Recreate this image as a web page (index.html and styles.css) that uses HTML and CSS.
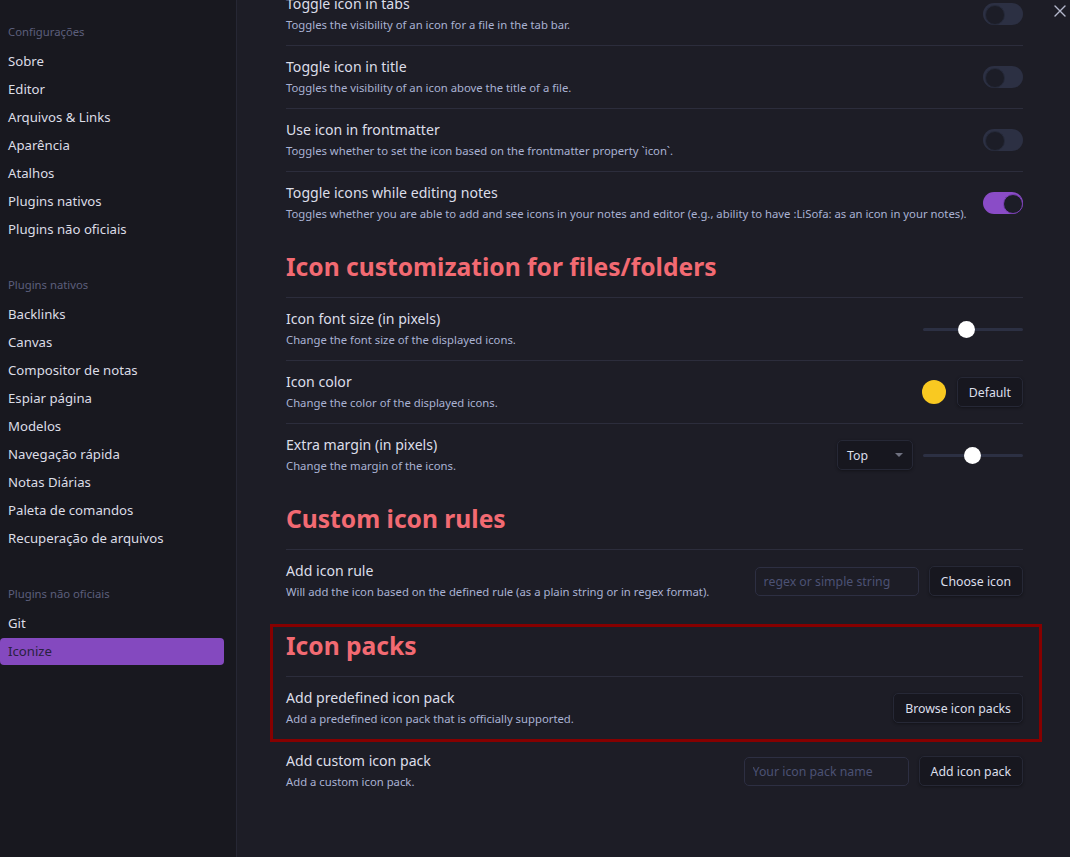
FILE: index.html
```html
<!DOCTYPE html>
<html lang="pt">
<head>
<meta charset="utf-8">
<title>Configurações</title>
<link rel="stylesheet" href="styles.css">
</head>
<body>
<div class="modal">
  <nav class="sidebar">
    <div class="group">
      <div class="group-title">Configurações</div>
      <div class="nav-item">Sobre</div>
      <div class="nav-item">Editor</div>
      <div class="nav-item">Arquivos &amp; Links</div>
      <div class="nav-item">Aparência</div>
      <div class="nav-item">Atalhos</div>
      <div class="nav-item">Plugins nativos</div>
      <div class="nav-item">Plugins não oficiais</div>
    </div>
    <div class="group">
      <div class="group-title">Plugins nativos</div>
      <div class="nav-item">Backlinks</div>
      <div class="nav-item">Canvas</div>
      <div class="nav-item">Compositor de notas</div>
      <div class="nav-item">Espiar página</div>
      <div class="nav-item">Modelos</div>
      <div class="nav-item">Navegação rápida</div>
      <div class="nav-item">Notas Diárias</div>
      <div class="nav-item">Paleta de comandos</div>
      <div class="nav-item">Recuperação de arquivos</div>
    </div>
    <div class="group">
      <div class="group-title">Plugins não oficiais</div>
      <div class="nav-item">Git</div>
      <div class="nav-item active">Iconize</div>
    </div>
  </nav>
  <main class="content">
    <div class="scroll">
      <div class="setting">
        <div class="info">
          <div class="name">Toggle icon in tabs</div>
          <div class="desc">Toggles the visibility of an icon for a file in the tab bar.</div>
        </div>
        <div class="control"><div class="toggle"></div></div>
      </div>
      <div class="setting">
        <div class="info">
          <div class="name">Toggle icon in title</div>
          <div class="desc">Toggles the visibility of an icon above the title of a file.</div>
        </div>
        <div class="control"><div class="toggle"></div></div>
      </div>
      <div class="setting">
        <div class="info">
          <div class="name">Use icon in frontmatter</div>
          <div class="desc">Toggles whether to set the icon based on the frontmatter property `icon`.</div>
        </div>
        <div class="control"><div class="toggle"></div></div>
      </div>
      <div class="setting">
        <div class="info">
          <div class="name">Toggle icons while editing notes</div>
          <div class="desc">Toggles whether you are able to add and see icons in your notes and editor (e.g., ability to have :LiSofa: as an icon in your notes).</div>
        </div>
        <div class="control"><div class="toggle on"></div></div>
      </div>

      <h2 class="heading">Icon customization for files/folders</h2>
      <div class="setting first">
        <div class="info">
          <div class="name">Icon font size (in pixels)</div>
          <div class="desc">Change the font size of the displayed icons.</div>
        </div>
        <div class="control">
          <div class="slider"><div class="thumb" style="left: 43px"></div></div>
        </div>
      </div>
      <div class="setting">
        <div class="info">
          <div class="name">Icon color</div>
          <div class="desc">Change the color of the displayed icons.</div>
        </div>
        <div class="control">
          <div class="swatch"></div>
          <button class="btn">Default</button>
        </div>
      </div>
      <div class="setting">
        <div class="info">
          <div class="name">Extra margin (in pixels)</div>
          <div class="desc">Change the margin of the icons.</div>
        </div>
        <div class="control">
          <div class="select"><span>Top</span><span class="caret"></span></div>
          <div class="slider"><div class="thumb" style="left: 49px"></div></div>
        </div>
      </div>

      <h2 class="heading">Custom icon rules</h2>
      <div class="setting first">
        <div class="info">
          <div class="name">Add icon rule</div>
          <div class="desc">Will add the icon based on the defined rule (as a plain string or in regex format).</div>
        </div>
        <div class="control">
          <input class="input rule-input" type="text" placeholder="regex or simple string">
          <button class="btn">Choose icon</button>
        </div>
      </div>

      <section class="highlight">
        <h2 class="heading">Icon packs</h2>
        <div class="setting first">
          <div class="info">
            <div class="name">Add predefined icon pack</div>
            <div class="desc">Add a predefined icon pack that is officially supported.</div>
          </div>
          <div class="control">
            <button class="btn">Browse icon packs</button>
          </div>
        </div>
        <div class="annotation"></div>
      </section>
      <div class="setting">
        <div class="info">
          <div class="name">Add custom icon pack</div>
          <div class="desc">Add a custom icon pack.</div>
        </div>
        <div class="control">
          <input class="input pack-input" type="text" placeholder="Your icon pack name">
          <button class="btn">Add icon pack</button>
        </div>
      </div>
    </div>
  </main>
  <button class="close" aria-label="Fechar">
    <svg width="12" height="12" viewBox="0 0 12 12"><path d="M1 1 L11 11 M11 1 L1 11" stroke="#b4b8cc" stroke-width="1.4" stroke-linecap="round" fill="none"/></svg>
  </button>
</div>
</body>
</html>
```

FILE: styles.css
```css
* { box-sizing: border-box; }

html, body {
  margin: 0;
  padding: 0;
  height: 100%;
  background: #1d1d26;
  font-family: "Noto Sans", "Open Sans", sans-serif;
  overflow: hidden;
}

.modal {
  position: relative;
  display: flex;
  width: 1070px;
  height: 857px;
}

/* Sidebar */
.sidebar {
  width: 237px;
  flex: none;
  background: #18181f;
  border-right: 1px solid #262734;
  padding: 22px 12px 0 0;
  display: flex;
  flex-direction: column;
  gap: 32px;
}

.group-title {
  padding-left: 8px;
  font-size: 11.3px;
  line-height: 20px;
  color: #5c5f7c;
  margin-bottom: 5px;
}

.nav-item {
  padding-left: 8px;
  height: 28px;
  line-height: 28px;
  font-size: 13.2px;
  color: #dcdde6;
  border-radius: 4px;
}

.nav-item.active {
  height: 27px;
  line-height: 27px;
  margin-top: 1px;
  background: #8449bf;
  color: #2a2140;
}

/* Content */
.content {
  flex: 1;
  padding: 0 47px 0 49px;
  overflow: hidden;
}

.scroll {
  margin-top: -17px;
}

.setting {
  display: flex;
  align-items: center;
  gap: 16px;
  padding: 11px 0 11px;
  border-top: 1px solid #2c2d3c;
}

.scroll > .setting:first-child {
  border-top: none;
}

.info {
  flex: 1;
  min-width: 0;
}

.name {
  font-size: 14.1px;
  line-height: 20px;
  color: #dcdee9;
}

.desc {
  margin-top: 2px;
  font-size: 11.3px;
  line-height: 18px;
  color: #a9b2d3;
  white-space: nowrap;
}

.control {
  display: flex;
  align-items: center;
  gap: 10px;
  flex: none;
}

.heading {
  margin: 17px 0 14px;
  font-size: 24.6px;
  line-height: 32px;
  font-weight: 700;
  color: #f26a72;
}

/* Toggle */
.toggle {
  position: relative;
  width: 40px;
  height: 22px;
  border-radius: 11px;
  background: #2c3043;
}

.toggle::after {
  content: "";
  position: absolute;
  top: 2px;
  left: 2px;
  width: 18px;
  height: 18px;
  border-radius: 50%;
  background: #1c1d27;
  border: 1px solid #262a3a;
}

.toggle.on {
  background: #8a4cc7;
}

.toggle.on::after {
  left: 20px;
  border-color: #7a40b5;
}

/* Slider */
.slider {
  position: relative;
  width: 100px;
  height: 3px;
  border-radius: 2px;
  background: #2c3043;
}

.thumb {
  position: absolute;
  top: -7px;
  width: 17px;
  height: 17px;
  margin-left: -8px;
  border-radius: 50%;
  background: #ffffff;
}

/* Color */
.swatch {
  width: 24px;
  height: 24px;
  border-radius: 50%;
  background: #f9c921;
  margin-right: 1px;
}

/* Buttons and inputs */
.btn {
  height: 30px;
  padding: 0 11px;
  border: 1px solid #262836;
  border-radius: 5px;
  background: #17171f;
  color: #dcdfeb;
  font-family: inherit;
  font-size: 12.3px;
  box-shadow: 0 1px 3px rgba(0, 0, 0, 0.35);
}

.select {
  width: 76px;
  height: 30px;
  display: flex;
  align-items: center;
  justify-content: space-between;
  padding: 0 9px 0 9px;
  border: 1px solid #262836;
  border-radius: 5px;
  background: #17171f;
  color: #dcdfeb;
  font-size: 12.3px;
  box-shadow: 0 1px 3px rgba(0, 0, 0, 0.35);
}

.caret {
  width: 0;
  height: 0;
  border-left: 4px solid transparent;
  border-right: 4px solid transparent;
  border-top: 4px solid #6f7180;
}

.input {
  height: 29px;
  padding: 0 8px;
  border: 1px solid #2d2f42;
  border-radius: 5px;
  background: #1d1d26;
  color: #dcdfeb;
  font-family: inherit;
  font-size: 12.3px;
  outline: none;
}

.input::placeholder {
  color: #4c5274;
}

.rule-input { width: 164px; }
.pack-input { width: 165px; }

/* Highlighted section */
.highlight {
  position: relative;
  display: flow-root;
}

.highlight .heading {
  margin-top: 18px;
}

.annotation {
  position: absolute;
  top: 12px;
  left: -16px;
  right: -19px;
  bottom: -3px;
  border: 3px solid #860000;
  pointer-events: none;
}

/* Close */
.close {
  position: absolute;
  top: 1px;
  right: 0;
  width: 20px;
  height: 20px;
  padding: 0;
  border: none;
  background: transparent;
  display: flex;
  align-items: center;
  justify-content: center;
}
```
